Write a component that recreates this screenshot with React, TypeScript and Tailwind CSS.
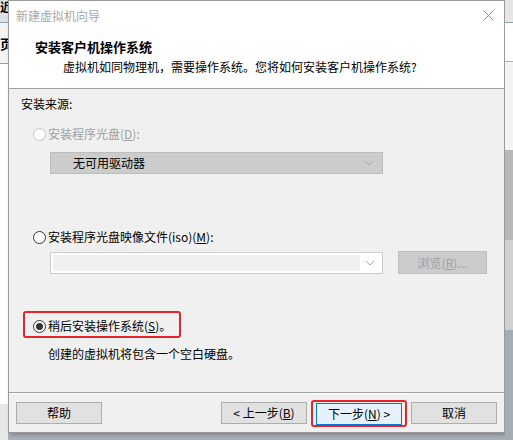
import React from "react";

const font = { fontFamily: '"Noto Sans CJK SC", "Microsoft YaHei", sans-serif' };

function Radio({ checked, disabled }: { checked?: boolean; disabled?: boolean }) {
  return (
    <span
      className={`flex h-[13px] w-[13px] shrink-0 items-center justify-center rounded-full border bg-white ${
        disabled ? "border-[#c4c4c4]" : "border-[#333333]"
      }`}
    >
      {checked && <span className="h-[7px] w-[7px] rounded-full bg-[#333333]" />}
    </span>
  );
}

function Chevron({ color }: { color: string }) {
  return (
    <svg width="10" height="6" viewBox="0 0 10 6">
      <path d="M1 1 L5 5 L9 1" fill="none" stroke={color} strokeWidth="1" />
    </svg>
  );
}

function Btn({ children, primary }: { children: React.ReactNode; primary?: boolean }) {
  return (
    <div
      className={`flex h-[22px] w-[86px] items-center justify-center border text-[12px] text-black ${
        primary ? "border-[#0078d7] bg-[#e5f1fb]" : "border-[#adadad] bg-[#e1e1e1]"
      }`}
    >
      {children}
    </div>
  );
}

export default function App() {
  return (
    <div className="flex h-[440px] w-[513px] overflow-hidden bg-[#a9b1b8]" style={font}>
      {/* window behind, left */}
      <div className="flex w-[8px] shrink-0 flex-col">
        <div className="h-[22px] bg-[#dfe3e8] text-[12px] leading-[14px] font-bold text-black">近</div>
        <div className="h-[1px] bg-[#8aa6c0]" />
        <div className="h-[40px] bg-[#f4f4f4] pt-[14px] text-[13px] font-bold leading-[14px] text-black">页</div>
        <div className="h-[1px] bg-[#8aa6c0]" />
        <div className="h-[340px] bg-white" />
        <div className="flex-1 bg-[#e8e8e8]" />
      </div>

      {/* dialog */}
      <div className="flex h-[433px] w-[497px] shrink-0 flex-col border border-[#9a9a9a] bg-[#f0f0f0] shadow-[2px_2px_4px_rgba(0,0,0,0.25)]">
        <div className="flex h-[29px] items-center justify-between bg-white pl-[7px] pr-[10px]">
          <span className="text-[12px] text-[#a8a8a8]">新建虚拟机向导</span>
          <svg width="11" height="11" viewBox="0 0 11 11">
            <path d="M0.5 0.5 L10.5 10.5 M10.5 0.5 L0.5 10.5" stroke="#8c8c8c" strokeWidth="1" />
          </svg>
        </div>
        <div className="flex h-[58px] flex-col bg-white pl-[26px] pt-[8px]">
          <div className="text-[13px] font-bold leading-[18px] text-black">安装客户机操作系统</div>
          <div className="pl-[28px] pt-[2px] text-[12px] leading-[18px] text-black">
            虚拟机如同物理机，需要操作系统。您将如何安装客户机操作系统?
          </div>
        </div>
        <div className="h-[1px] bg-[#a0a0a0]" />

        <div className="flex flex-1 flex-col pl-[12px] text-[12px]">
          <div className="mt-[7px] leading-[16px] text-black">安装来源:</div>

          <div className="ml-[12px] mt-[14px] flex h-[16px] items-center gap-[2px] text-[#a0a0a0]">
            <Radio disabled />
            <span>
              安装程序光盘(<span className="underline">D</span>):
            </span>
          </div>
          <div className="ml-[29px] mt-[10px] flex h-[22px] w-[333px] items-center justify-between border border-[#bcbcbc] bg-[#cccccc] pl-[22px] pr-[8px]">
            <span className="text-black">无可用驱动器</span>
            <Chevron color="#a8a8a8" />
          </div>

          <div className="ml-[12px] mt-[55px] flex h-[16px] items-center gap-[2px] text-black">
            <Radio />
            <span>
              安装程序光盘映像文件(iso)(<span className="underline">M</span>):
            </span>
          </div>
          <div className="mt-[6px] flex items-center">
            <div className="ml-[29px] flex h-[22px] w-[333px] items-center border border-[#cccccc] bg-white p-[2px]">
              <div className="h-full flex-1 bg-[#f0f0f0]" />
              <div className="flex w-[20px] items-center justify-center">
                <Chevron color="#a8a8a8" />
              </div>
            </div>
            <div className="ml-[15px] flex h-[23px] w-[89px] items-center justify-center border border-[#bfbfbf] bg-[#cccccc] text-[#a0a0a0]">
              浏览(<span className="underline">R</span>)...
            </div>
          </div>

          <div className="ml-[2px] mt-[37px] flex h-[27px] w-[158px] items-center gap-[2px] rounded-[3px] border-2 border-[#e8242b] pl-[8px] pt-[3px] text-black">
            <Radio checked />
            <span>
              稍后安装操作系统(<span className="underline">S</span>)。
            </span>
          </div>
          <div className="ml-[27px] mt-[8px] leading-[16px] text-black">创建的虚拟机将包含一个空白硬盘。</div>
        </div>

        <div className="h-[1px] bg-[#a0a0a0]" />
        <div className="h-[1px] bg-white" />
        <div className="flex h-[38px] items-start pl-[7px] pt-[8px]">
          <Btn>帮助</Btn>
          <div className="ml-[119px]">
            <Btn>
              &lt; 上一步(<span className="underline">B</span>)
            </Btn>
          </div>
          <div className="ml-[4px] flex h-[27px] w-[96px] -translate-y-[2px] items-center justify-center rounded-[3px] border-2 border-[#e8242b]">
            <Btn primary>
              下一步(<span className="underline">N</span>) &gt;
            </Btn>
          </div>
          <div className="ml-[4px]">
            <Btn>取消</Btn>
          </div>
        </div>
      </div>

      {/* window behind, right */}
      <div className="flex w-[8px] shrink-0 flex-col">
        <div className="h-[22px] bg-[#e6e6e6]" />
        <div className="h-[1px] bg-[#8aa6c0]" />
        <div className="h-[38px] bg-white" />
        <div className="h-[1px] bg-[#8ab8d8]" />
        <div className="h-[88px] bg-[#f4f4f4]" />
        <div className="h-[90px] bg-[#b8b8b8]" />
        <div className="h-[90px] bg-[#d0d0d0]" />
        <div className="flex-1 bg-[#a4acb4]" />
      </div>
    </div>
  );
}
